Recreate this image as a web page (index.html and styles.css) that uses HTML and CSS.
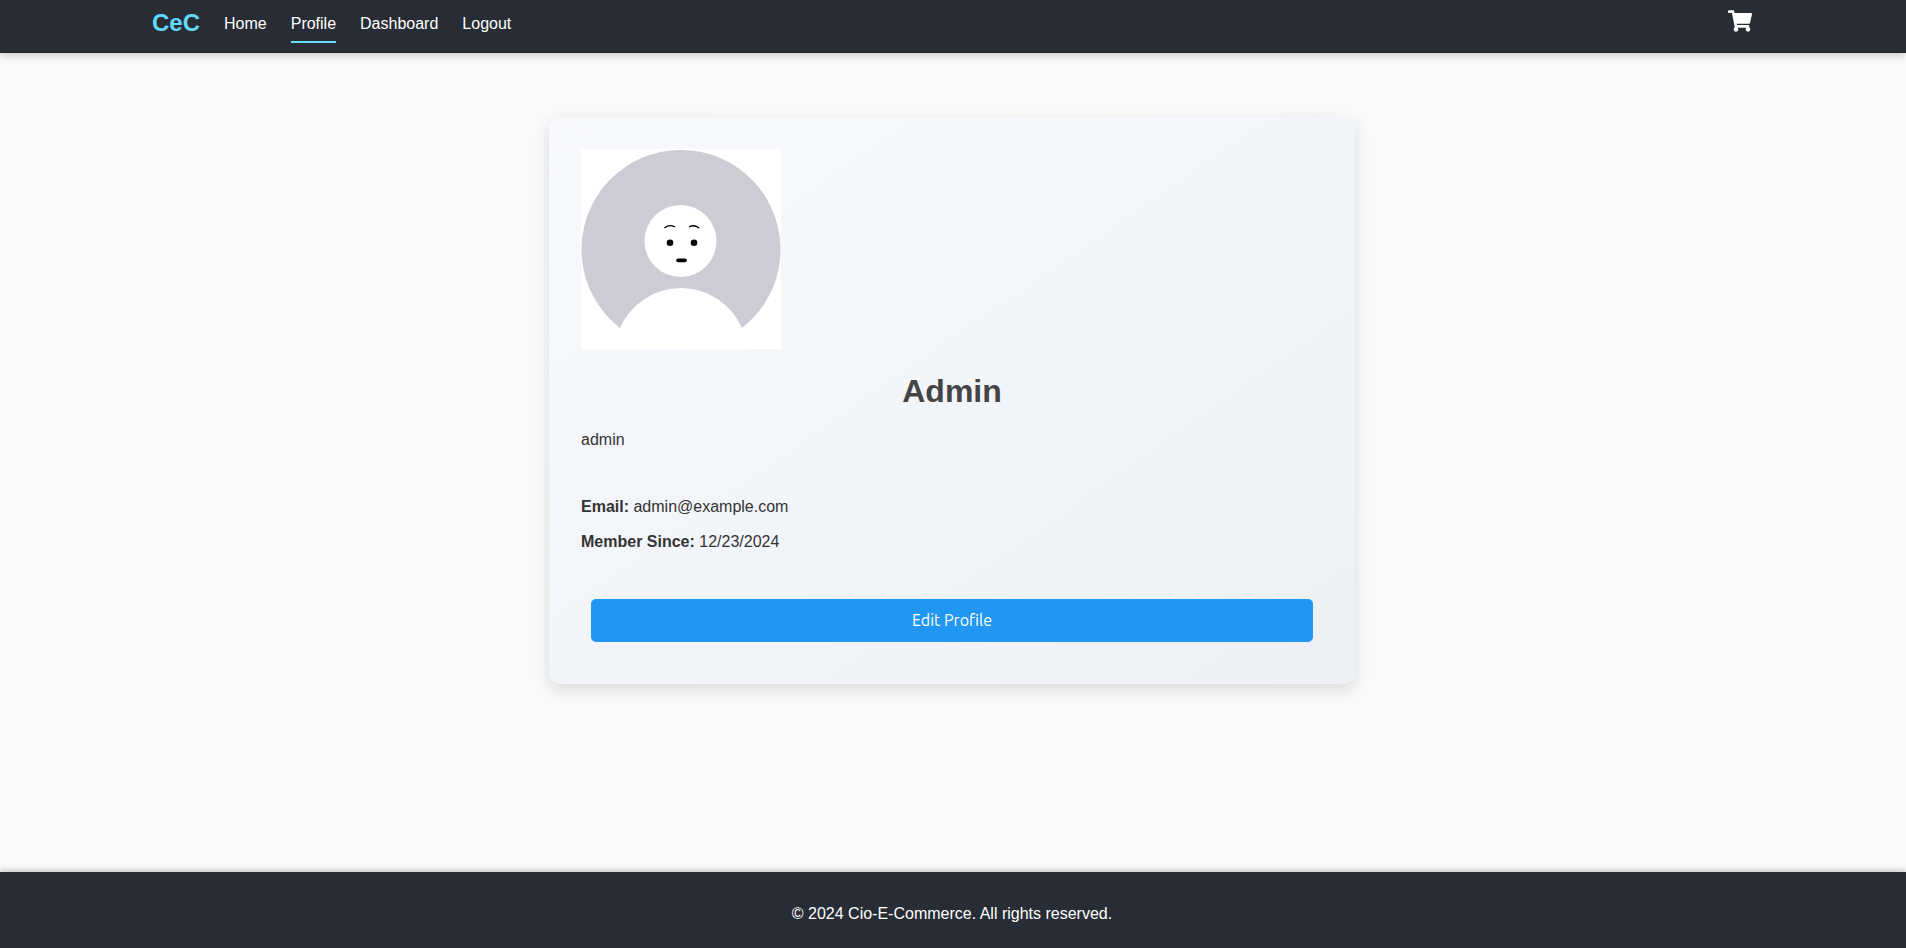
FILE: index.html
```html
<!DOCTYPE html>
<html lang="en">
<head>
<meta charset="utf-8">
<meta name="viewport" content="width=device-width, initial-scale=1">
<title>CeC - Profile</title>
<link rel="stylesheet" href="styles.css">
</head>
<body class="page">
<header class="header">
  <nav class="nav" aria-label="Main">
    <a class="logo" href="#">CeC</a>
    <a class="nav-link" href="#">Home</a>
    <a class="nav-link nav-link-active" href="#" aria-current="page">Profile</a>
    <a class="nav-link" href="#">Dashboard</a>
    <a class="nav-link" href="#">Logout</a>
    <a class="cart" href="#" aria-label="Cart">
      <svg class="cart-icon" viewBox="0 0 576 512" aria-hidden="true"><path fill="currentColor" d="M528.12 301.319l47.273-208C578.806 78.301 567.391 64 551.99 64H159.208l-9.166-44.81C147.758 8.021 137.93 0 126.529 0H24C10.745 0 0 10.745 0 24v16c0 13.255 10.745 24 24 24h69.883l70.248 343.435C147.325 417.1 136 435.222 136 456c0 30.928 25.072 56 56 56s56-25.072 56-56c0-15.674-6.447-29.835-16.824-40h209.647C430.447 426.165 424 440.326 424 456c0 30.928 25.072 56 56 56s56-25.072 56-56c0-22.172-12.888-41.332-31.579-50.405l5.517-24.276c3.413-15.018-8.002-29.319-23.403-29.319H218.117l-6.545-32h293.145c11.206 0 20.92-7.754 23.403-18.681z"/></svg>
    </a>
  </nav>
</header>
<main class="main">
  <section class="card">
    <svg class="avatar" viewBox="0 0 200 200" role="img" aria-label="Avatar">
      <path fill="#fff" d="M0 0h200v200H0z"/>
      <path fill="#cdccd4" d="M39 179A99.500 99.500 0 1 1 161 179A66.500 66.500 0 0 0 39 179z"/>
      <circle cx="99.500" cy="92" r="36" fill="#fff"/>
      <circle cx="89" cy="93.700" r="3.300"/>
      <circle cx="113" cy="93.700" r="3.300"/>
      <path fill="none" stroke="#000" stroke-width="1.300" d="M83.500 79Q88.500 75 94 78M108 78Q113 75 118 79"/>
      <path stroke="#000" stroke-width="3.800" stroke-linecap="round" d="M97.200 111.300h6.800"/>
    </svg>
    <h1 class="name">Admin</h1>
    <p class="role">admin</p>
    <div class="details">
      <p class="detail"><strong>Email:</strong> admin@example.com</p>
      <p class="detail"><strong>Member Since:</strong> 12/23/2024</p>
    </div>
    <button class="edit-button" type="button">Edit Profile</button>
  </section>
</main>
<footer class="footer">
  <p class="copyright">© 2024 Cio-E-Commerce. All rights reserved.</p>
</footer>
</body>
</html>
```

FILE: styles.css
```css
* {
  box-sizing: border-box;
}

.page {
  display: flex;
  flex-direction: column;
  min-height: 100vh;
  margin: 0;
  background: #f9f9f9;
  color: #333;
  font: 16px/26px "Liberation Sans", Arial, sans-serif;
}

.header {
  background: #282c34;
  border-bottom: 1px solid #20232a;
  box-shadow: 0 2px 8px rgba(0, 0, 0, 0.2);
}

.nav {
  display: flex;
  align-items: flex-start;
  gap: 24px;
  max-width: 1602px;
  margin: 0 auto;
  padding-bottom: 9px;
}

.logo {
  padding-top: 10px;
  color: #61dafb;
  font-size: 24px;
  font-weight: bold;
  text-decoration: none;
}

.nav-link {
  padding: 11px 0 4px;
  border-bottom: 2px solid transparent;
  color: #fff;
  text-decoration: none;
}

.nav-link-active {
  border-bottom-color: #61dafb;
}

.cart {
  display: flex;
  margin-left: auto;
  padding: 10px 2px 0 0;
  color: #fff;
}

.cart-icon {
  width: 24px;
  height: 22px;
}

.main {
  flex: 1;
  padding: 64px 18px 64px 16px;
}

.card {
  max-width: 806px;
  margin: 0 auto;
  padding: 32px;
  border-radius: 12px;
  background: linear-gradient(145deg, #f7f9fd, #edf0f5);
  box-shadow: 0 6px 16px rgba(0, 0, 0, 0.12);
}

.avatar {
  display: block;
  width: 200px;
  height: 200px;
}

.name {
  margin: 16px 0 10px;
  color: #444;
  font-size: 32px;
  line-height: 52px;
  text-align: center;
}

.role {
  margin: 0 0 41px;
}

.details {
  display: grid;
  gap: 9px;
}

.detail {
  margin: 0;
}

.edit-button {
  display: block;
  width: calc(100% - 20px);
  margin: 44px 10px 10px;
  padding: 10px 20px;
  border: 0;
  border-radius: 5px;
  background: #2196f3;
  color: #fff;
  font: 16px/23px Ubuntu, "Noto Sans", sans-serif;
  cursor: pointer;
}

.footer {
  padding: 29px 18px 21px 16px;
  background: #282c34;
  box-shadow: 0 -2px 5px rgba(0, 0, 0, 0.2);
  color: #fff;
  text-align: center;
}

.copyright {
  margin: 0;
}
```
